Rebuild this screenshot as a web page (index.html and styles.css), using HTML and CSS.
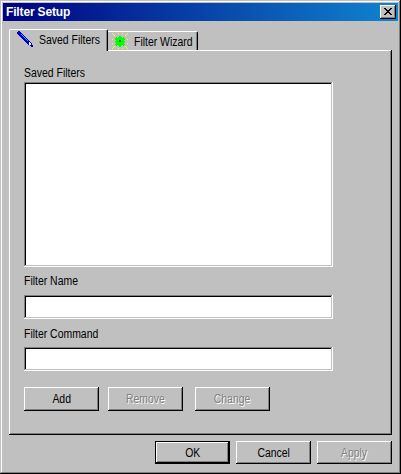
FILE: index.html
```html
<!DOCTYPE html>
<html lang="en">
<head>
<meta charset="utf-8">
<title>Filter Setup</title>
<link rel="stylesheet" href="styles.css">
</head>
<body>
<div class="window">
  <div class="titlebar">
    <span class="title">Filter Setup</span>
    <button class="close" aria-label="Close"><svg width="8" height="7" viewBox="0 0 8 7" shape-rendering="crispEdges"><path d="M0 0h2v1h-2zM6 0h2v1h-2zM1 1h2v1h-2zM5 1h2v1h-2zM2 2h4v1h-4zM3 3h2v1h-2zM2 4h4v1h-4zM1 5h2v1h-2zM5 5h2v1h-2zM0 6h2v1h-2zM6 6h2v1h-2z"/></svg></button>
  </div>
  <div class="tabs">
    <div class="tab active">
      <svg class="pencil" width="16" height="16" viewBox="0 0 16 16" shape-rendering="crispEdges">
        <path fill="#0000e0" d="M1 0h2v1h-2zM0 1h4v1h-4zM0 2h5v1h-5zM1 3h5v1h-5zM2 4h5v1h-5zM3 5h5v1h-5zM4 6h5v1h-5zM5 7h5v1h-5zM6 8h5v1h-5zM7 9h5v1h-5zM8 10h5v1h-5zM9 11h5v1h-5zM10 12h5v1h-5zM11 13h4v1h-4zM13 14h3v1h-3zM14 15h2v1h-2z"/>
        <path fill="#000090" d="M1 0h2v1h-2zM0 1h1v2h-1zM1 3h1v1h-1zM2 4h1v1h-1zM3 5h1v1h-1zM4 6h1v1h-1zM5 7h1v1h-1zM6 8h1v1h-1zM7 9h1v1h-1zM8 10h1v1h-1zM9 11h1v1h-1zM10 12h1v1h-1zM14 14h2v2h-2z"/>
        <path fill="#00b8ff" d="M4 3h1v1h-1zM5 4h1v1h-1zM6 5h1v1h-1zM7 6h1v1h-1zM8 7h1v1h-1zM9 8h1v1h-1zM10 9h1v1h-1z"/>
        <path fill="#fff" d="M12 11h1v1h1v2h-2z"/>
      </svg>
      <span class="label">Saved Filters</span>
    </div>
    <div class="tab second">
      <svg class="spark" width="16" height="16" viewBox="0 0 16 16" shape-rendering="crispEdges">
        <path fill="#ff0" d="M0 0h1v1h-1zM1 1h1v1h-1zM2 2h1v1h-1zM15 0h1v1h-1zM14 1h1v1h-1zM13 2h1v1h-1zM0 15h1v1h-1zM1 14h1v1h-1zM2 13h1v1h-1zM15 15h1v1h-1zM14 14h1v1h-1zM13 13h1v1h-1zM6 0h1v1h-1zM10 0h1v1h-1zM6 15h1v1h-1zM10 15h1v1h-1zM0 6h1v1h-1zM0 10h1v1h-1zM15 6h1v1h-1zM15 10h1v1h-1z"/>
        <path fill="#0f0" d="M7 3h2v1h1v1h1v-1h1v1h1v2h-1v1h1v2h-1v1h1v1h-1v1h-1v-1h-1v1h-1v1h-2v-1h-1v-1h-1v1h-1v-1h-1v-1h1v-1h-1v-2h1v-1h-1v-2h1v-1h1v1h1v-1h1z"/>
        <path fill="#008000" d="M7 7h2v2h-2z"/>
      </svg>
      <span class="label">Filter Wizard</span>
    </div>
  </div>
  <div class="panel">
    <div class="caption"><span class="label">Saved Filters</span></div>
    <div class="field list"></div>
    <div class="caption name"><span class="label">Filter Name</span></div>
    <div class="field"></div>
    <div class="caption command"><span class="label">Filter Command</span></div>
    <div class="field"></div>
    <div class="actions">
      <button class="btn"><span class="label">Add</span></button>
      <button class="btn off"><span class="label">Remove</span></button>
      <button class="btn off change"><span class="label">Change</span></button>
    </div>
  </div>
  <div class="footer">
    <button class="btn default"><span class="label">OK</span></button>
    <button class="btn"><span class="label">Cancel</span></button>
    <button class="btn off"><span class="label">Apply</span></button>
  </div>
</div>
</body>
</html>
```
FILE: styles.css
```css
* { box-sizing: border-box; }
body {
  margin: 0;
  background: #c0c0c0;
  font: 12px/14px "Liberation Sans", sans-serif;
  color: #000;
}
.window {
  width: 401px;
  height: 474px;
  padding: 3px;
  background: #c0c0c0;
  box-shadow: inset -1px -1px #000, inset 1px 1px #c0c0c0, inset -2px -2px #808080, inset 2px 2px #fff;
  overflow: hidden;
}
.titlebar {
  display: flex;
  align-items: center;
  justify-content: space-between;
  height: 18px;
  padding: 0 2px 0 3px;
  background: linear-gradient(90deg, #000080, #1084d0);
}
.title {
  font: bold 12px/16px "Liberation Sans", sans-serif;
  letter-spacing: -0.15px;
  color: #fff;
}
button {
  margin: 0;
  padding: 0;
  border: 0;
  font: inherit;
  color: #000;
  background: #c0c0c0;
  white-space: nowrap;
}
.close {
  display: flex;
  align-items: center;
  justify-content: center;
  width: 16px;
  height: 14px;
  padding: 0 1px 1px 0;
  box-shadow: inset -1px -1px #000, inset 1px 1px #fff, inset -2px -2px #808080;
}
.tabs {
  display: flex;
  align-items: flex-end;
  height: 30px;
  padding: 0 0 0 6px;
}
.tab {
  display: flex;
  white-space: nowrap;
  border-top: 1px solid #fff;
  border-right: 1px solid #000;
  box-shadow: inset -1px 0 #808080;
}
.active {
  width: 99px;
  height: 22px;
  padding: 1px 0 0 7px;
  border-left: 1px solid #fff;
  border-radius: 2px 2px 0 0;
  background: #c0c0c0;
  position: relative;
  z-index: 1;
}
.second {
  width: 90px;
  height: 19px;
  margin-bottom: 1px;
  padding: 1px 0 0 4px;
  border-radius: 0 2px 0 0;
}
.tab svg { flex: none; }
.label {
  display: inline-block;
  white-space: nowrap;
  transform: scaleX(0.87);
  transform-origin: left;
}
.btn .label { transform-origin: center; }
.tab .label { margin: 2px 0 0 6px; }
.panel {
  width: 383px;
  height: 385px;
  margin: -1px 0 0 6px;
  padding: 16px 15px 0;
  box-shadow: inset -1px -1px #000, inset 1px 1px #fff, inset -2px -2px #808080;
}
.caption { height: 16px; }
.field {
  width: 309px;
  height: 24px;
  background: #fff;
  box-shadow: inset -1px -1px #fff, inset 1px 1px #808080, inset -2px -2px #c0c0c0, inset 2px 2px #000;
}
.list { height: 185px; }
.name { height: 28px; padding-top: 7px; }
.command { height: 28px; padding-top: 8px; }
.actions { display: flex; margin-top: 16px; }
.btn {
  width: 75px;
  height: 24px;
  line-height: 14px;
  box-shadow: inset -1px -1px #000, inset 1px 1px #fff, inset -2px -2px #808080;
}
.actions .btn + .btn { margin-left: 9px; }
.actions .change.btn { margin-left: 12px; }
.off { color: #808080; text-shadow: 1px 1px #fff; }
.footer {
  display: flex;
  justify-content: flex-end;
  gap: 6px;
  margin: 6px 6px 0 0;
}
.footer .btn { height: 23px; }
.footer .default {
  box-shadow: inset 0 0 0 1px #000, inset -2px -2px #000, inset 2px 2px #fff, inset -3px -3px #808080;
}
```
